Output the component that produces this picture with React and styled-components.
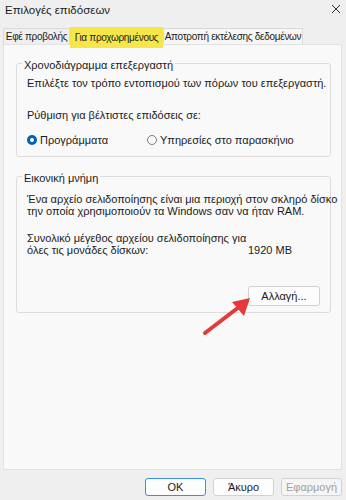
import React from 'react';
import styled, { createGlobalStyle } from 'styled-components';

const GlobalStyle = createGlobalStyle`
  html, body {
    margin: 0;
    padding: 0;
    background: #efefef;
  }
  body {
    font-family: "Liberation Sans", Arial, sans-serif;
    font-size: 11px;
    color: #1b1b1b;
  }
`;

const Window = styled.div`
  width: 346px;
  height: 500px;
  background: #efefef;
  display: flex;
  flex-direction: column;
  overflow: hidden;
  white-space: nowrap;
`;

const TitleBar = styled.div`
  height: 27px;
  display: flex;
  align-items: flex-start;
  justify-content: space-between;
  padding: 1px 4px 0 5px;
  box-sizing: border-box;
  font-size: 11.5px;
`;

const Title = styled.span`
  margin-top: 3px;
`;

const CloseIcon = styled.svg`
  margin-top: 3px;
  margin-right: 1px;
`;

const TabRow = styled.div`
  display: flex;
  align-items: flex-end;
  padding-left: 3px;
  height: 17px;
  position: relative;
  z-index: 1;
`;

const Tab = styled.div`
  width: ${({ $w }) => $w}px;
  height: 16px;
  display: flex;
  align-items: center;
  justify-content: center;
  border: 1px solid #dadada;
  border-bottom: none;
  background: ${({ $light }) => ($light ? '#f6f6f6' : '#efefef')};
  box-sizing: border-box;
  font-size: 10px;
  letter-spacing: -0.3px;
`;

const ActiveTab = styled.div`
  width: 93px;
  height: 21px;
  margin-bottom: -4px;
  display: flex;
  align-items: center;
  justify-content: center;
  background: #f6e64a;
  box-sizing: border-box;
  font-size: 10px;
  letter-spacing: -0.3px;
`;

const Panel = styled.div`
  position: relative;
  margin: 0 4px 0 3px;
  height: 426px;
  background: #f9f9f9;
  border: 1px solid #e2e2e2;
  box-sizing: border-box;
  padding: 9px 10px 0 12px;
`;

const Group = styled.fieldset`
  margin: 0 0 ${({ $mb }) => $mb || 0}px;
  border: 1px solid #dcdcdc;
  border-radius: 3px;
  padding: 0 10px ${({ $pb }) => $pb}px 10px;
  min-width: 0;
`;

const Legend = styled.legend`
  margin-left: -5px;
  padding: 4px 2px 0;
  line-height: 14px;
`;

const Text = styled.div`
  line-height: 12px;
  margin-top: ${({ $mt }) => $mt || 0}px;
`;

const RadioRow = styled.div`
  display: flex;
  align-items: center;
  height: 13px;
  margin-top: 12px;
`;

const RadioItem = styled.label`
  display: flex;
  align-items: center;
  gap: 3px;
  width: ${({ $w }) => $w || 'auto'};
`;

const RadioDot = styled.span`
  width: 10px;
  height: 10px;
  border-radius: 50%;
  box-sizing: border-box;
  background: ${({ $on }) => ($on ? '#ffffff' : 'transparent')};
  border: ${({ $on }) => ($on ? '3px solid #0063b8' : '1px solid #7a7a7a')};
`;

const SizeRow = styled.div`
  display: grid;
  grid-template-columns: 221px auto;
  align-items: end;
  margin-top: 15px;
`;

const Button = styled.button`
  display: block;
  font-family: inherit;
  font-size: 11px;
  color: ${({ disabled }) => (disabled ? '#a0a0a0' : '#1b1b1b')};
  background: ${({ disabled }) => (disabled ? '#f5f5f5' : '#fdfdfd')};
  border: 1px solid ${({ $primary }) => ($primary ? '#3d8ee0' : '#d2d2d2')};
  border-radius: 3px;
  width: ${({ $w }) => $w}px;
  height: ${({ $h }) => $h}px;
  padding: 0;
  box-sizing: border-box;
`;

const ChangeRow = styled.div`
  display: flex;
  justify-content: flex-end;
  margin-top: 30px;
`;

const Footer = styled.div`
  display: flex;
  justify-content: flex-end;
  gap: 7px;
  padding: 8px 4px 0 0;
`;

const Arrow = styled.svg`
  position: absolute;
  left: 196px;
  top: 248px;
  overflow: visible;
`;

export default function App() {
  return (
    <Window>
      <GlobalStyle />
      <TitleBar>
        <Title>Επιλογές επιδόσεων</Title>
        <CloseIcon width="10" height="10" viewBox="0 0 10 10">
          <path d="M1 1 L9 9 M9 1 L1 9" stroke="#333" strokeWidth="1" />
        </CloseIcon>
      </TitleBar>
      <TabRow>
        <Tab $w={67}>Εφέ προβολής</Tab>
        <ActiveTab>Για προχωρημένους</ActiveTab>
        <Tab $w={140} $light>Αποτροπή εκτέλεσης δεδομένων</Tab>
      </TabRow>
      <Panel>
        <Group $pb={10} $mb={10}>
          <Legend>Χρονοδιάγραμμα επεξεργαστή</Legend>
          <Text $mt={5}>Επιλέξτε τον τρόπο εντοπισμού των πόρων του επεξεργαστή.</Text>
          <Text $mt={20}>Ρύθμιση για βέλτιστες επιδόσεις σε:</Text>
          <RadioRow>
            <RadioItem $w="120px">
              <RadioDot $on />
              Προγράμματα
            </RadioItem>
            <RadioItem>
              <RadioDot />
              Υπηρεσίες στο παρασκήνιο
            </RadioItem>
          </RadioRow>
        </Group>
        <Group $pb={6}>
          <Legend>Εικονική μνήμη</Legend>
          <Text $mt={8}>
            Ένα αρχείο σελιδοποίησης είναι μια περιοχή στον σκληρό δίσκο
            <br />
            την οποία χρησιμοποιούν τα Windows σαν να ήταν RAM.
          </Text>
          <SizeRow>
            <Text>
              Συνολικό μέγεθος αρχείου σελιδοποίησης για
              <br />
              όλες τις μονάδες δίσκων:
            </Text>
            <Text>1920 MB</Text>
          </SizeRow>
          <ChangeRow>
            <Button $w={72} $h={20}>Αλλαγή...</Button>
          </ChangeRow>
        </Group>
        <Arrow width="54" height="44" viewBox="0 0 54 44">
          <path d="M5 40 L39 14" stroke="#e63a3a" strokeWidth="4" strokeLinecap="round" />
          <polygon points="50,5 32,9 44,23" fill="#e63a3a" />
        </Arrow>
      </Panel>
      <Footer>
        <Button $primary $w={61} $h={18}>OK</Button>
        <Button $w={61} $h={18}>Άκυρο</Button>
        <Button disabled $w={61} $h={18}>Εφαρμογή</Button>
      </Footer>
    </Window>
  );
}
